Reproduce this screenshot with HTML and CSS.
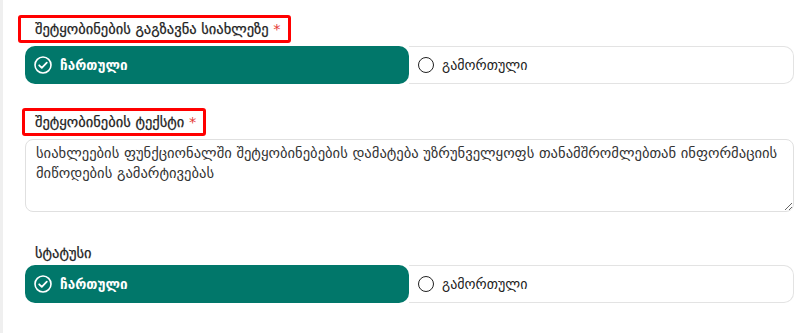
FILE: index.html
```html
<!DOCTYPE html>
<html>
<head>
    <title>შეტყობინების პარამეტრები</title>
    <link rel="stylesheet" href="styles.css">
</head>
<body>
    <div class="page">
        <div class="field">
            <label class="label"><span class="hl hl-wide">შეტყობინების გაგზავნა სიახლეზე <i class="req">*</i></span></label>
            <div class="toggle">
                <button class="opt on">
                    <svg width="18" height="18" viewBox="0 0 18 18"><circle cx="9" cy="9" r="8" fill="none" stroke="#fff" stroke-width="1.6"/><path d="M5.2 9.3l2.6 2.6 5-5.2" fill="none" stroke="#fff" stroke-width="1.8" stroke-linecap="round" stroke-linejoin="round"/></svg>
                    ჩართული
                </button>
                <button class="opt">
                    <span class="radio"></span>
                    გამორთული
                </button>
            </div>
        </div>

        <div class="field">
            <label class="label"><span class="hl">შეტყობინების ტექსტი <i class="req">*</i></span></label>
            <textarea class="text">სიახლეების ფუნქციონალში შეტყობინებების დამატება უზრუნველყოფს თანამშრომლებთან ინფორმაციის მიწოდების გამარტივებას</textarea>
        </div>

        <div class="field status">
            <label class="label plain">სტატუსი</label>
            <div class="toggle">
                <button class="opt on">
                    <svg width="18" height="18" viewBox="0 0 18 18"><circle cx="9" cy="9" r="8" fill="none" stroke="#fff" stroke-width="1.6"/><path d="M5.2 9.3l2.6 2.6 5-5.2" fill="none" stroke="#fff" stroke-width="1.8" stroke-linecap="round" stroke-linejoin="round"/></svg>
                    ჩართული
                </button>
                <button class="opt">
                    <span class="radio"></span>
                    გამორთული
                </button>
            </div>
        </div>
    </div>
</body>
</html>
```

FILE: styles.css
```css
body {
    margin: 0;
    background: #fff;
    font-family: 'DejaVu Sans', 'Noto Sans', sans-serif;
    color: #222;
}
.page {
    border-left: 3px solid #efefef;
    padding: 15px 14px 0 22px;
    min-height: 318px;
}
.field {
    margin-bottom: 24px;
}
.label {
    display: block;
    font-size: 14.5px;
    font-weight: 400;
    -webkit-text-stroke: 0.25px #222;
    margin-bottom: 3px;
}
.hl {
    display: inline-block;
    border: 3px solid #f00;
    border-radius: 3px;
    padding: 2px 7px 2px 10px;
    line-height: 18px;
}
.hl-wide {
    margin-left: -7px;
    padding-left: 14px;
}
.hl:not(.hl-wide) {
    margin-left: -3px;
}
.req {
    font-style: normal;
    color: #e53935;
    -webkit-text-stroke: 0;
}
.toggle {
    display: flex;
    height: 38px;
}
.opt {
    flex: 1;
    display: flex;
    align-items: center;
    gap: 8px;
    padding: 0 9px;
    font-family: inherit;
    font-size: 14px;
    color: #222;
    background: #fff;
    border: 1px solid #e3e3e3;
    border-left: none;
    border-radius: 0 10px 10px 0;
    cursor: pointer;
}
.opt.on {
    background: #01776a;
    border: none;
    border-radius: 10px;
    color: #fff;
    font-size: 13.5px;
    font-weight: 700;
}
.radio {
    width: 14px;
    height: 14px;
    border: 1.5px solid #222;
    border-radius: 50%;
}
.text {
    display: block;
    box-sizing: border-box;
    width: 100%;
    height: 73px;
    margin-top: 1px;
    padding: 3px 2px 3px 10px;
    border: 1px solid #e0e0e0;
    border-radius: 8px;
    font-family: inherit;
    font-size: 14.6px;
    line-height: 20px;
    color: #333;
    resize: vertical;
}
.status {
    margin-top: 33px;
}
.plain {
    margin-bottom: 4px;
    padding-left: 10px;
}
```
